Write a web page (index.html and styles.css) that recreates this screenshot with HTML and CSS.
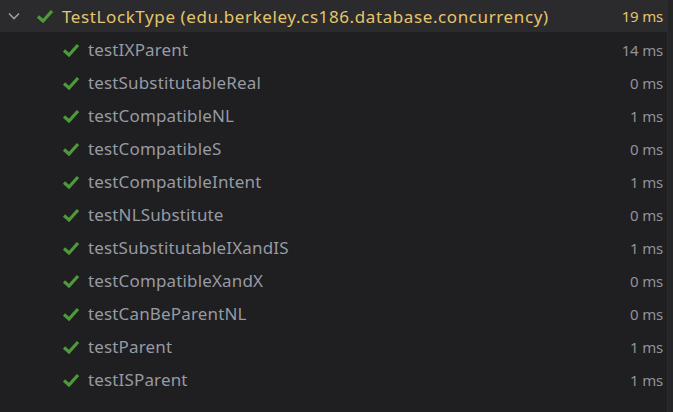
FILE: index.html
```html
<!DOCTYPE html>
<html>
<head>
<meta charset="utf-8">
<link rel="stylesheet" href="styles.css">
</head>
<body>
<div class="panel">
  <div class="tree">
    <div class="row head">
      <svg class="chev" width="14" height="14" viewBox="0 0 14 14"><path d="M2 4.5 L7 9.5 L12 4.5" fill="none" stroke="#9c9ca0" stroke-width="1.6"/></svg>
      <svg class="check" width="18" height="18" viewBox="0 0 18 18"><path d="M2 9.5 L7 14 L16 4" fill="none" stroke="#4e9a3a" stroke-width="3.2"/></svg>
      <span class="name">TestLockType (edu.berkeley.cs186.database.concurrency)</span>
      <span class="time">19 ms</span>
    </div>
    <div class="row child"><svg class="check" width="18" height="18" viewBox="0 0 18 18"><path d="M2 9.5 L7 14 L16 4" fill="none" stroke="#4e9a3a" stroke-width="3.2"/></svg><span class="name">testIXParent</span><span class="time">14 ms</span></div>
    <div class="row child"><svg class="check" width="18" height="18" viewBox="0 0 18 18"><path d="M2 9.5 L7 14 L16 4" fill="none" stroke="#4e9a3a" stroke-width="3.2"/></svg><span class="name">testSubstitutableReal</span><span class="time">0 ms</span></div>
    <div class="row child"><svg class="check" width="18" height="18" viewBox="0 0 18 18"><path d="M2 9.5 L7 14 L16 4" fill="none" stroke="#4e9a3a" stroke-width="3.2"/></svg><span class="name">testCompatibleNL</span><span class="time">1 ms</span></div>
    <div class="row child"><svg class="check" width="18" height="18" viewBox="0 0 18 18"><path d="M2 9.5 L7 14 L16 4" fill="none" stroke="#4e9a3a" stroke-width="3.2"/></svg><span class="name">testCompatibleS</span><span class="time">0 ms</span></div>
    <div class="row child"><svg class="check" width="18" height="18" viewBox="0 0 18 18"><path d="M2 9.5 L7 14 L16 4" fill="none" stroke="#4e9a3a" stroke-width="3.2"/></svg><span class="name">testCompatibleIntent</span><span class="time">1 ms</span></div>
    <div class="row child"><svg class="check" width="18" height="18" viewBox="0 0 18 18"><path d="M2 9.5 L7 14 L16 4" fill="none" stroke="#4e9a3a" stroke-width="3.2"/></svg><span class="name">testNLSubstitute</span><span class="time">0 ms</span></div>
    <div class="row child"><svg class="check" width="18" height="18" viewBox="0 0 18 18"><path d="M2 9.5 L7 14 L16 4" fill="none" stroke="#4e9a3a" stroke-width="3.2"/></svg><span class="name">testSubstitutableIXandIS</span><span class="time">1 ms</span></div>
    <div class="row child"><svg class="check" width="18" height="18" viewBox="0 0 18 18"><path d="M2 9.5 L7 14 L16 4" fill="none" stroke="#4e9a3a" stroke-width="3.2"/></svg><span class="name">testCompatibleXandX</span><span class="time">0 ms</span></div>
    <div class="row child"><svg class="check" width="18" height="18" viewBox="0 0 18 18"><path d="M2 9.5 L7 14 L16 4" fill="none" stroke="#4e9a3a" stroke-width="3.2"/></svg><span class="name">testCanBeParentNL</span><span class="time">0 ms</span></div>
    <div class="row child"><svg class="check" width="18" height="18" viewBox="0 0 18 18"><path d="M2 9.5 L7 14 L16 4" fill="none" stroke="#4e9a3a" stroke-width="3.2"/></svg><span class="name">testParent</span><span class="time">1 ms</span></div>
    <div class="row child"><svg class="check" width="18" height="18" viewBox="0 0 18 18"><path d="M2 9.5 L7 14 L16 4" fill="none" stroke="#4e9a3a" stroke-width="3.2"/></svg><span class="name">testISParent</span><span class="time">1 ms</span></div>
  </div>
  <div class="scroll"></div>
</div>
</body>
</html>
```
FILE: styles.css
```css
html, body {
  margin: 0;
  padding: 0;
  background: #1f1e21;
  width: 673px;
  height: 412px;
  overflow: hidden;
}
.panel {
  display: flex;
  height: 412px;
}
.tree {
  flex: 1;
  display: flex;
  flex-direction: column;
  font-family: "Noto Sans", "Open Sans", sans-serif;
}
.scroll {
  width: 5px;
  background: #252427;
  border-left: 1px solid #2c2b2e;
}
.row {
  height: 33px;
  display: flex;
  align-items: center;
  padding-right: 4px;
}
.head {
  background: #2b2b2d;
  height: 32px;
  margin-bottom: 1px;
  padding-left: 7px;
}
.chev {
  margin-right: 15px;
}
.head .name {
  color: #e6c46b;
  letter-spacing: 0.6px;
}
.head .time {
  color: #e6c46b;
}
.child {
  padding-left: 62px;
}
.check {
  margin-right: 8px;
  flex: none;
}
.name {
  flex: 1;
  font-size: 17px;
  color: #969ba3;
  white-space: nowrap;
  letter-spacing: 0.15px;
}
.time {
  font-size: 15px;
  color: #8f939a;
  letter-spacing: -0.2px;
}
```
